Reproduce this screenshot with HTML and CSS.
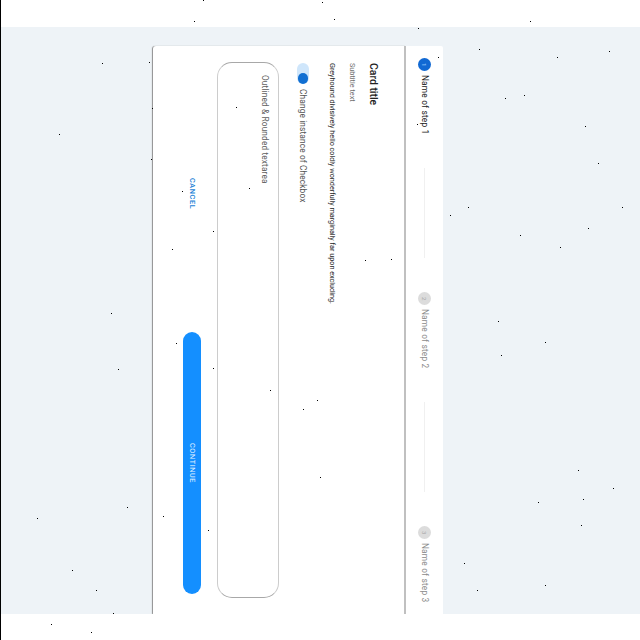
FILE: index.html
```
<!DOCTYPE html>
<html lang="en">
<head>
<meta charset="utf-8">
<title>Card with stepper</title>
<link rel="stylesheet" href="styles.css">
</head>
<body>
<main class="stage">
  <nav class="stepper">
    <div class="step active"><span class="num">1</span><span class="name">Name of step 1</span></div>
    <i class="line"></i>
    <div class="step"><span class="num">2</span><span class="name">Name of step 2</span></div>
    <i class="line"></i>
    <div class="step"><span class="num">3</span><span class="name">Name of step 3</span></div>
  </nav>
  <section class="card">
    <h1 class="title">Card title</h1>
    <p class="subtitle">Subtitle text</p>
    <p class="copy">Greyhound divisively hello coldly wonderfully marginally far upon excluding.</p>
    <div class="switch-row"><span class="switch"><i class="knob"></i></span><span class="switch-label">Change instance of Checkbox</span></div>
    <div class="textarea"><span>Outlined &amp; Rounded textarea</span></div>
    <div class="actions">
      <button class="btn cancel">CANCEL</button>
      <button class="btn continue">CONTINUE</button>
    </div>
  </section>
</main>
<svg class="specks" width="640" height="640" viewBox="0 0 640 640" shape-rendering="crispEdges" aria-hidden="true">
  <path stroke="#000" stroke-width="1" d="M203 .5h1M194 21.5h1M322 2.5h1M334 19.5h1M530 21.5h1M418 28.5h1M102 63.5h1M149 62.5h1M479 49.5h1M557 57.5h1M609 51.5h1M438 57.5h1M524 95.5h1M505 98.5h1M417 124.5h1M585 126.5h1M59 134.5h1M152 108.5h1M151 159.5h1M236 107.5h1M598 163.5h1M249 188.5h1M182 191.5h1M468 207.5h1M622 207.5h1M450 215.5h1M213 231.5h1M172 249.5h1M588 228.5h1M520 235.5h1M560 247.5h1M365 260.5h1M391 259.5h1M111 313.5h1M498 321.5h1M176 343.5h1M545 342.5h1M501 355.5h1M118 369.5h1M213 368.5h1M270 390.5h1M317 400.5h1M303 409.5h1M578 470.5h1M320 477.5h1M613 488.5h1M583 499.5h1M538 502.5h1M127 507.5h1M163 516.5h1M37 518.5h1M581 525.5h1M208 530.5h1M464 563.5h1M72 570.5h1M545 585.5h1M96 590.5h1M477 590.5h1M113 613.5h1M51 624.5h1M91 632.5h1"/>
</svg>
</body>
</html>
```
FILE: styles.css
```
* { box-sizing: border-box; }
html { background: #fff; }
body {
  margin: 0;
  width: 640px;
  height: 640px;
  padding-top: 27px;
  border-left: 1px solid #000;
  overflow: hidden;
  font-family: Roboto, "Liberation Sans", sans-serif;
  color: #222;
}
h1, p { margin: 0; padding-top: 1px; font-weight: 400; white-space: nowrap; }

/* The whole screen reads top to bottom, blocks stack right to left. */
.stage {
  writing-mode: vertical-rl;
  display: flex;
  flex-direction: column;
  width: 639px;
  height: 587px;
  padding: 19px 197px 0 152px;
  background: #eef3f7;
  overflow: hidden;
}

.stepper {
  display: flex;
  align-items: center;
  flex: none;
  width: 37px;
  height: 568px;
  padding-top: 12px;
  background: #fff;
  border-top-right-radius: 2px;
  white-space: nowrap;
}
.step {
  display: flex;
  align-items: center;
  flex: none;
  gap: 3.5px;
  height: 75px;
  color: #8c8c8c;
  font-size: 8.3px;
  line-height: 13px;
}
.name { flex: none; letter-spacing: 0.2px; }
.num {
  display: flex;
  flex: none;
  align-items: center;
  justify-content: center;
  width: 13px;
  height: 13px;
  border-radius: 50%;
  background: #dcdcdc;
  color: #aaa;
  font-size: 6px;
}
.active { color: #222; }
.active .num { background: #1169d3; color: #8fc5fb; }
.line {
  flex: none;
  width: 1px;
  height: 90px;
  margin: 35px 0 34px;
  background: #f0f0f0;
}

.card {
  flex: none;
  width: 253px;
  height: 568px;
  padding: 16px 24.7px 0 0;
  background: #fff;
  border-right: 2px solid #c0c0c0;
  border-top-left-radius: 3px;
  box-shadow: -1px 0 1px #8e8e8e;
}
.title {
  width: 16px;
  margin-right: -2px;
  font-size: 10.4px;
  line-height: 16px;
  font-weight: 500;
}
.subtitle {
  width: 12px;
  margin-right: 7.8px;
  font-size: 7.3px;
  line-height: 12px;
  color: #707070;
}
.copy {
  width: 12px;
  margin-right: 7.2px;
  font-size: 7.3px;
  line-height: 12px;
  letter-spacing: -0.03px;
}
.switch-row {
  display: flex;
  align-items: center;
  gap: 5px;
  width: 12px;
  margin-right: 17.3px;
  padding-top: 0.7px;
  font-size: 8.3px;
  line-height: 12px;
  color: #555;
  white-space: nowrap;
}
.switch {
  display: flex;
  flex: none;
  justify-content: flex-end;
  width: 12px;
  height: 21px;
  border-radius: 6px;
  background: #cfe6fb;
}
.knob {
  width: 10.5px;
  height: 10.5px;
  margin-right: 1px;
  border-radius: 50%;
  background: #116fd2;
}
.textarea {
  width: 62px;
  height: 536px;
  margin-right: 17.8px;
  padding: 11.5px 7.5px 0 0;
  border: 1px solid #a8a8a8;
  border-left-color: #ccc;
  border-right-color: #ccc;
  border-radius: 15px;
  font-size: 8.3px;
  line-height: 12px;
  color: #606060;
}
.actions {
  display: flex;
  gap: 8px;
  width: 18px;
  height: 532px;
  margin-right: 16.2px;
}
.btn {
  writing-mode: vertical-rl;
  flex: 1;
  width: 18px;
  padding: 1px 0 0;
  border: 0;
  border-radius: 9px;
  background: none;
  font-family: inherit;
  font-size: 7.3px;
  font-weight: 500;
  line-height: 18px;
  letter-spacing: 0.6px;
  text-align: center;
  color: #1a7fd6;
}
.continue { background: #148fff; color: #e6f4ff; font-weight: 400; }
.switch-label, .textarea span { letter-spacing: 0.14px; }

.specks { position: absolute; top: 0; left: 0; pointer-events: none; }
```
